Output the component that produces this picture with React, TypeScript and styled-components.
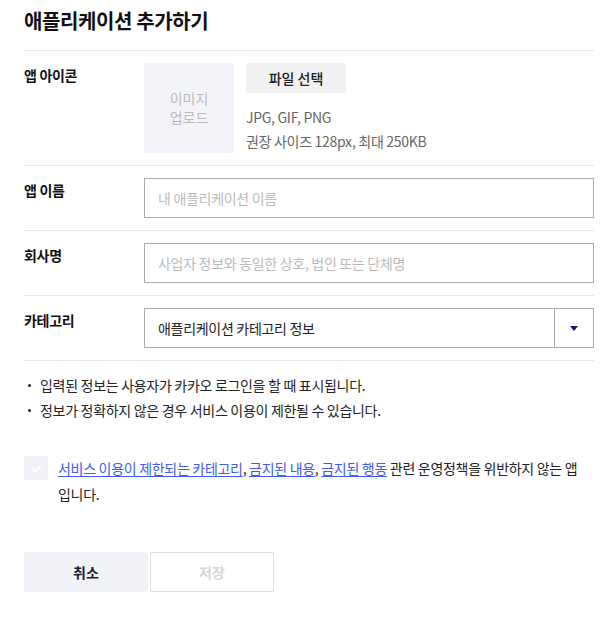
import React from 'react';
import styled, { createGlobalStyle } from 'styled-components';

const GlobalStyle = createGlobalStyle`
  * {
    box-sizing: border-box;
  }
  body {
    margin: 0;
    background: #fff;
    font-family: 'Noto Sans CJK KR', 'Noto Sans', sans-serif;
    color: #222;
  }
`;

const Page = styled.div`
  width: 570px;
  margin-left: 24px;
  padding-top: 7px;
`;

const Title = styled.h1`
  margin: 0;
  height: 43px;
  font-size: 20px;
  line-height: 28px;
  font-weight: 700;
  letter-spacing: -0.02em;
  color: #111;
`;

const Row = styled.div`
  display: flex;
  padding: 12px 0;
  border-top: 1px solid #e6e6e6;
`;

const Label = styled.div`
  width: 120px;
  flex-shrink: 0;
  font-size: 14px;
  line-height: 24px;
  font-weight: 700;
  letter-spacing: -0.3px;
  color: #111;
`;

const Field = styled.div`
  flex: 1;
  display: flex;
`;

const UploadBox = styled.div`
  width: 90px;
  height: 90px;
  display: flex;
  align-items: center;
  justify-content: center;
  text-align: center;
  background: #f3f4f9;
  color: #bbb;
  font-size: 14px;
  line-height: 19px;
`;

const UploadInfo = styled.div`
  margin-left: 12px;
  display: flex;
  flex-direction: column;
  align-items: flex-start;
`;

const FileButton = styled.button`
  width: 100px;
  height: 30px;
  border: 0;
  background: #f1f1f1;
  font-family: inherit;
  font-size: 14px;
  font-weight: 500;
  color: #222;
  padding: 0;
  margin-bottom: 12px;
`;

const Hint = styled.div`
  font-size: 14px;
  line-height: 24px;
  color: #666;
  letter-spacing: -0.3px;
`;

const TextInput = styled.input`
  width: 100%;
  height: 40px;
  border: 1px solid #aaa;
  padding: 0 13px;
  font-family: inherit;
  font-size: 14px;
  letter-spacing: -0.3px;
  color: #222;
  outline: none;
  &::placeholder {
    color: #bbb;
  }
`;

const Select = styled.div`
  width: 100%;
  height: 40px;
  display: flex;
  border: 1px solid #aaa;
`;

const SelectValue = styled.div`
  flex: 1;
  display: flex;
  align-items: center;
  padding: 0 13px;
  font-size: 14px;
  letter-spacing: -0.3px;
  color: #222;
`;

const SelectArrow = styled.div`
  width: 39px;
  display: flex;
  align-items: center;
  justify-content: center;
  border-left: 1px solid #aaa;
  svg {
    width: 8px;
    height: 5px;
    fill: #13136b;
  }
`;

const Notes = styled.ul`
  margin: 0;
  padding: 12px 0 0;
  border-top: 1px solid #e6e6e6;
  list-style: none;
`;

const Note = styled.li`
  position: relative;
  padding-left: 16px;
  font-size: 14px;
  line-height: 24.5px;
  letter-spacing: -0.3px;
  color: #222;
  &::before {
    content: '';
    position: absolute;
    left: 4px;
    top: 11px;
    width: 3px;
    height: 3px;
    border-radius: 50%;
    background: #222;
  }
`;

const Agree = styled.label`
  display: flex;
  gap: 10px;
  margin-top: 34px;
`;

const CheckBox = styled.span`
  width: 24px;
  height: 24px;
  flex-shrink: 0;
  display: flex;
  align-items: center;
  justify-content: center;
  background: #f2f3f8;
  svg {
    width: 11px;
    height: 9px;
    stroke: #fff;
    fill: none;
    stroke-width: 2;
  }
`;

const AgreeText = styled.p`
  margin: -1px 0 0;
  font-size: 14px;
  line-height: 26px;
  letter-spacing: -0.3px;
  word-break: keep-all;
  color: #222;
`;

const PolicyLink = styled.a`
  color: #3e5bf5;
  text-decoration: underline;
  text-underline-offset: 2px;
`;

const Buttons = styled.div`
  display: flex;
  gap: 2px;
  margin-top: 45px;
`;

const ActionButton = styled.button<{ $primary?: boolean }>`
  width: 124px;
  height: 40px;
  padding: 0;
  font-family: inherit;
  font-size: 14px;
  font-weight: 700;
  border: ${p => (p.$primary ? '0' : '1px solid #ddd')};
  background: ${p => (p.$primary ? '#f2f3f8' : '#fff')};
  color: ${p => (p.$primary ? '#1c1c3a' : '#d6d6d6')};
`;

const App: React.FC = () => {
  return (
    <>
      <GlobalStyle />
      <Page>
        <Title>애플리케이션 추가하기</Title>
        <Row>
          <Label>앱 아이콘</Label>
          <Field>
            <UploadBox>
              이미지
              <br />
              업로드
            </UploadBox>
            <UploadInfo>
              <FileButton>파일 선택</FileButton>
              <Hint>JPG, GIF, PNG</Hint>
              <Hint>권장 사이즈 128px, 최대 250KB</Hint>
            </UploadInfo>
          </Field>
        </Row>
        <Row>
          <Label>앱 이름</Label>
          <Field>
            <TextInput placeholder="내 애플리케이션 이름" />
          </Field>
        </Row>
        <Row>
          <Label>회사명</Label>
          <Field>
            <TextInput placeholder="사업자 정보와 동일한 상호, 법인 또는 단체명" />
          </Field>
        </Row>
        <Row>
          <Label>카테고리</Label>
          <Field>
            <Select>
              <SelectValue>애플리케이션 카테고리 정보</SelectValue>
              <SelectArrow>
                <svg viewBox="0 0 8 5">
                  <path d="M0 0h8L4 5z" />
                </svg>
              </SelectArrow>
            </Select>
          </Field>
        </Row>
        <Notes>
          <Note>입력된 정보는 사용자가 카카오 로그인을 할 때 표시됩니다.</Note>
          <Note>정보가 정확하지 않은 경우 서비스 이용이 제한될 수 있습니다.</Note>
        </Notes>
        <Agree>
          <CheckBox>
            <svg viewBox="0 0 11 9">
              <path d="M1 4.5l3 3 6-6" />
            </svg>
          </CheckBox>
          <AgreeText>
            <PolicyLink href="#">서비스 이용이 제한되는 카테고리</PolicyLink>,{' '}
            <PolicyLink href="#">금지된 내용</PolicyLink>,{' '}
            <PolicyLink href="#">금지된 행동</PolicyLink> 관련 운영정책을 위반하지 않는 앱
            입니다.
          </AgreeText>
        </Agree>
        <Buttons>
          <ActionButton $primary>취소</ActionButton>
          <ActionButton>저장</ActionButton>
        </Buttons>
      </Page>
    </>
  );
};

export default App;
